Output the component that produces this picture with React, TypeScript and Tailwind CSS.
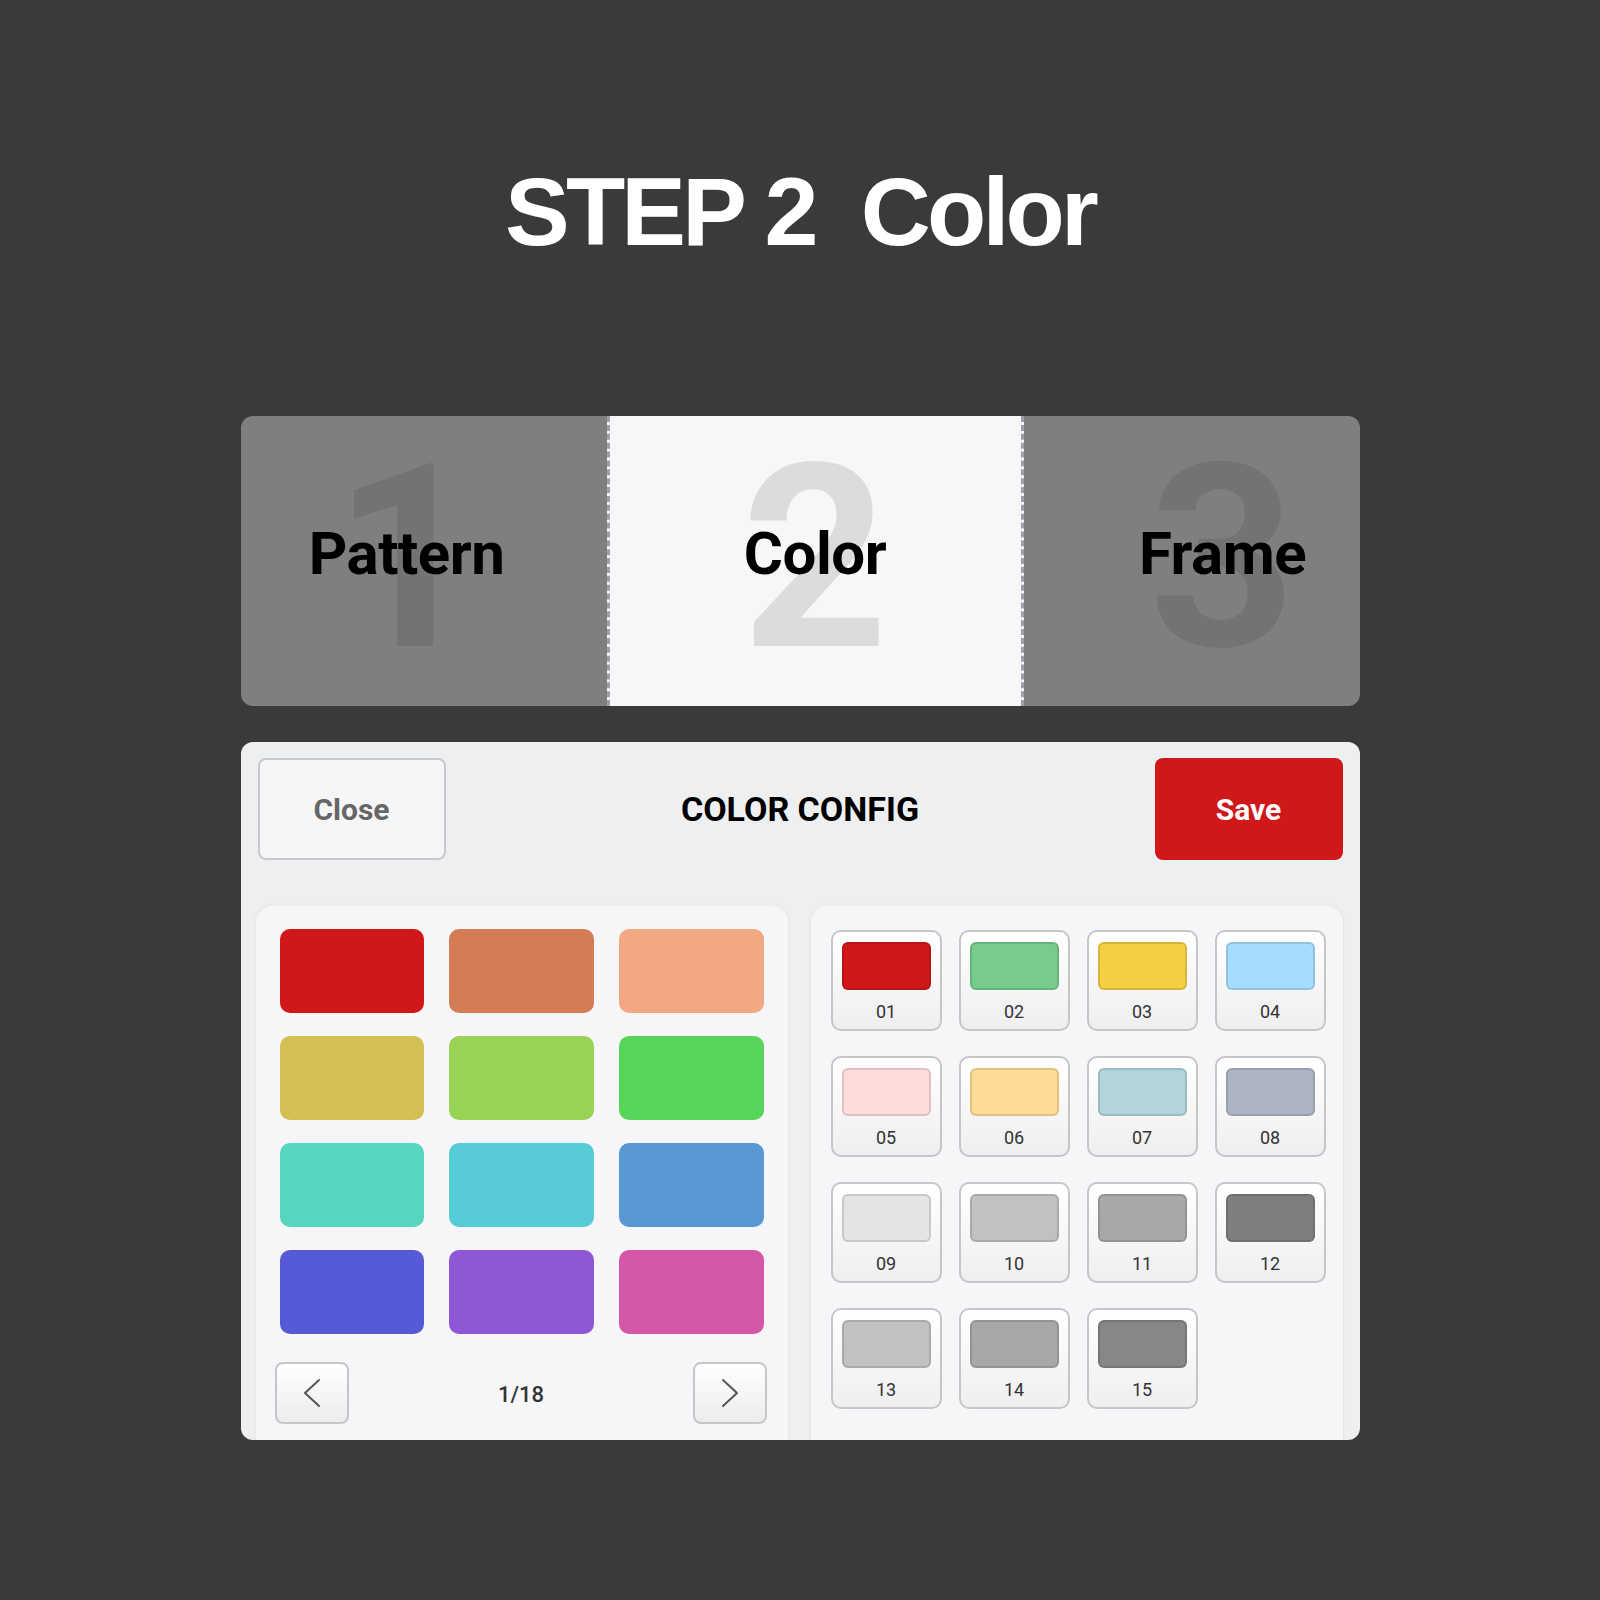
const palette = [
  "#d0171a",
  "#d47c56",
  "#f2a983",
  "#d4bf55",
  "#98d355",
  "#57d558",
  "#56d5bf",
  "#56ccd6",
  "#5898d4",
  "#575ad6",
  "#8d57d6",
  "#d457a8",
];

const presets: [string, string][] = [
  ["01", "#d0171a"],
  ["02", "#77cc8b"],
  ["03", "#f5cf42"],
  ["04", "#a6dcfd"],
  ["05", "#fedcdc"],
  ["06", "#fedc96"],
  ["07", "#b2d5dc"],
  ["08", "#adb5c3"],
  ["09", "#e3e4e6"],
  ["10", "#c1c1c1"],
  ["11", "#a8a8a8"],
  ["12", "#7f7f7f"],
  ["13", "#c1c1c1"],
  ["14", "#a8a8a8"],
  ["15", "#878787"],
];

function Chevron({ dir }: { dir: "left" | "right" }) {
  return (
    <svg width="20" height="30" viewBox="0 0 20 30" fill="none">
      <polyline
        points={dir === "left" ? "17,2 3,15 17,28" : "3,2 17,15 3,28"}
        stroke="#555"
        strokeWidth="2"
        strokeLinecap="round"
        strokeLinejoin="round"
      />
    </svg>
  );
}

function Step({
  num,
  label,
  active,
  className,
}: {
  num: string;
  label: string;
  active?: boolean;
  className: string;
}) {
  return (
    <div
      className={`relative flex items-center justify-center ${
        active ? "bg-[#f7f7f9]" : "bg-[#7f7f7f]"
      } ${className}`}
    >
      <div className="relative flex items-center justify-center pb-[14px]">
        <span
          className={`absolute translate-y-[5px] font-bold leading-none text-[256px] ${
            active ? "text-[#dcdcde]" : "text-[#737373]"
          }`}
        >
          {num}
        </span>
        <span className="relative text-[60px] font-bold leading-none text-black tracking-[-0.5px]">
          {label}
        </span>
      </div>
    </div>
  );
}

export default function App() {
  return (
    <div
      className="min-h-[1600px] w-full bg-[#3b393a] flex flex-col items-center"
      style={{ fontFamily: "Roboto, 'Liberation Sans', sans-serif" }}
    >
      <h1
        className="mt-[163px] flex gap-[46px] text-[97px] font-bold leading-none text-white tracking-[-3.8px]"
        style={{ fontFamily: "'Liberation Sans', Arial, sans-serif" }}
      >
        <span>STEP 2</span>
        <span>Color</span>
      </h1>

      {/* steps */}
      <div className="mt-[156px] flex h-[290px] w-[1119px] overflow-hidden rounded-[12px]">
        <Step num="1" label="Pattern" className="w-[366px] pr-[34px]" />
        <Step
          num="2"
          label="Color"
          active
          className="w-[417px] border-x-[3px] border-dashed border-[#9ca1a9]"
        />
        <Step num="3" label="Frame" className="w-[336px] pl-[62px]" />
      </div>

      {/* config */}
      <div className="mt-[36px] h-[698px] w-[1119px] overflow-hidden rounded-[12px] bg-[#eeeff1] px-[17px] pt-[16px]">
        <div className="flex items-center justify-between">
          <button className="flex h-[102px] w-[188px] items-center justify-center rounded-[8px] border-2 border-[#c5c9cf] bg-[#f6f6f7] text-[30px] font-bold text-[#666]">
            Close
          </button>
          <div className="text-[34px] font-bold text-black">COLOR CONFIG</div>
          <button className="flex h-[102px] w-[188px] items-center justify-center rounded-[8px] bg-[#d0171a] text-[30px] font-bold text-white">
            Save
          </button>
        </div>

        <div className="-ml-[2px] mt-[46px] flex gap-[23px]">
          <div className="h-[600px] w-[532px] rounded-[16px] bg-[#f6f6f8] px-[24px] pt-[23px] shadow-[0_0_4px_rgba(0,0,0,0.06)]">
            <div className="grid grid-cols-3 gap-x-[25px] gap-y-[23px]">
              {palette.map((c, i) => (
                <div
                  key={i}
                  className="h-[84px] rounded-[10px]"
                  style={{ backgroundColor: c }}
                />
              ))}
            </div>
            <div className="mt-[28px] flex items-center justify-between">
              <button className="-ml-[5px] flex h-[62px] w-[74px] items-center justify-center rounded-[8px] border-2 border-[#c3c7cc] bg-gradient-to-b from-white to-[#ececec]">
                <Chevron dir="left" />
              </button>
              <span className="mt-[3px] text-[22px] font-medium text-[#333]">1/18</span>
              <button className="-mr-[4px] flex h-[62px] w-[74px] items-center justify-center rounded-[8px] border-2 border-[#c3c7cc] bg-gradient-to-b from-white to-[#ececec]">
                <Chevron dir="right" />
              </button>
            </div>
          </div>

          <div className="h-[600px] w-[532px] rounded-[16px] bg-[#f6f6f8] pl-[20px] pr-[17px] pt-[24px] shadow-[0_0_4px_rgba(0,0,0,0.06)]">
            <div className="grid grid-cols-4 gap-x-[17px] gap-y-[25px]">
              {presets.map(([n, c]) => (
                <div
                  key={n}
                  className="flex h-[101px] flex-col items-center rounded-[10px] border-2 border-[#c3c6cb] bg-gradient-to-b from-white to-[#efefef] pt-[10px]"
                >
                  <div
                    className="h-[48px] w-[89px] rounded-[6px] border-2"
                    style={{
                      backgroundColor: c,
                      borderColor: "rgba(0,0,0,0.12)",
                    }}
                  />
                  <span className="mt-[11px] text-[18px] leading-[22px] text-[#333]">
                    {n}
                  </span>
                </div>
              ))}
            </div>
          </div>
        </div>
      </div>
    </div>
  );
}
